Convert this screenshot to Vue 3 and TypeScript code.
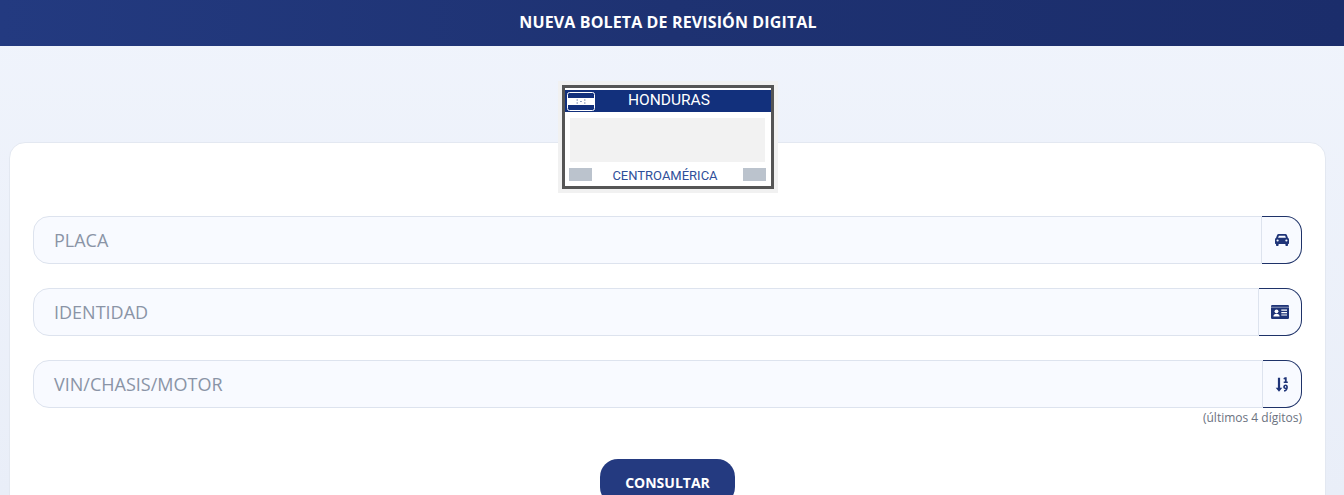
<template>
  <div class="page">
    <header class="topbar">NUEVA BOLETA DE REVISIÓN DIGITAL</header>

    <div class="plate-wrap">
      <div class="plate">
        <div class="plate-head">
          <svg class="flag" viewBox="0 0 28 19">
            <rect x="0.500" y="0.500" width="27" height="18" rx="2" fill="#12307c" stroke="#fff" />
            <rect x="1" y="6" width="26" height="7" fill="#fff" />
            <g fill="#6f82ad">
              <rect x="9.500" y="7.500" width="1.500" height="1" />
              <rect x="9.500" y="10.500" width="1.500" height="1" />
              <rect x="13.200" y="9" width="1.500" height="1" />
              <rect x="17" y="7.500" width="1.500" height="1" />
              <rect x="17" y="10.500" width="1.500" height="1" />
            </g>
          </svg>
          <span class="plate-country">HONDURAS</span>
        </div>
        <div class="plate-number"></div>
        <div class="plate-foot">
          <span class="plate-tab"></span>
          <span class="plate-region">CENTROAMÉRICA</span>
          <span class="plate-tab"></span>
        </div>
      </div>
    </div>

    <main class="card">
      <div v-for="field in fields" :key="field.label" class="field">
        <div class="input-group">
          <div class="input">{{ field.label }}</div>
          <div class="addon" :style="{ width: field.addon + 'px' }">
            <svg v-if="field.icon === 'car'" class="icon" width="16" height="14" viewBox="0 0 16 14">
              <path
                fill="#1f3478"
                fill-rule="evenodd"
                d="M4.600 1h6.800c.7 0 1.200.4 1.500 1l1 2.700c.7.3 1.100.9 1.100 1.700v3.800c0 .4-.3.7-.7.7h-.3v1.300c0 .5-.4.8-.8.8h-1c-.5 0-.8-.3-.8-.8V10.900H4.600v1.300c0 .5-.3.8-.8.8h-1c-.4 0-.8-.3-.8-.8v-1.300h-.3c-.4 0-.7-.3-.7-.7V6.400c0-.8.4-1.400 1.100-1.700l1-2.700c.3-.6.8-1 1.500-1zM4.900 2.800 4.100 4.800h7.800l-.8-2zM3.600 6.400a1.100 1.100 0 1 0 0 2.200 1.100 1.100 0 0 0 0-2.200zm8.800 0a1.100 1.100 0 1 0 0 2.200 1.100 1.100 0 0 0 0-2.200z"
              />
            </svg>
            <svg v-else-if="field.icon === 'card'" class="icon" width="18" height="14" viewBox="0 0 18 14">
              <rect width="18" height="14" rx="1.200" fill="#1f3478" />
              <rect y="1.800" width="18" height="0.800" fill="#fff" opacity="0.600" />
              <circle cx="5.500" cy="6.300" r="1.900" fill="#fff" />
              <path fill="#fff" d="M2.400 11.500c0-1.700 1.300-2.700 3.100-2.700s3.100 1 3.100 2.700z" />
              <path fill="#fff" d="M10.300 4.600h5.700v1.200h-5.700zM10.300 7h5.700v1.200h-5.700zM10.300 9.400h5.700v1.200h-5.700z" />
            </svg>
            <svg v-else class="icon" width="14" height="15" viewBox="0 0 14 15">
              <path fill="#1f3478" d="M2.900 0.800h2.200v10h2.200L4 14.800.7 10.800h2.200z" />
              <path fill="#1f3478" d="M9.900 0.300h1.800v4.300h1.100v1.500H8.700V4.600h1.200V2.200l-1 .4-.5-1.300z" />
              <path
                fill="#1f3478"
                fill-rule="evenodd"
                d="M10.600 7.500c1.400 0 2.300.9 2.300 2.500 0 2.600-1.400 4.500-3.600 4.700l-.4-1.400c.9-.1 1.600-.6 2-1.300-1.600.3-2.700-.5-2.700-1.900 0-1.500 1-2.600 2.400-2.600zm0 1.400c-.4 0-.7.400-.7 1 0 .7.500.9 1.400.7 0-1.100-.2-1.700-.7-1.700z"
              />
            </svg>
          </div>
        </div>
        <div v-if="field.hint" class="hint">{{ field.hint }}</div>
      </div>

      <div class="actions">
        <button class="submit" type="button">CONSULTAR</button>
      </div>
    </main>
  </div>
</template>

<script setup lang="ts">
interface Field {
  label: string;
  icon: "car" | "card" | "digits";
  addon: number;
  hint?: string;
}

const fields: Field[] = [
  { label: "PLACA", icon: "car", addon: 40 },
  { label: "IDENTIDAD", icon: "card", addon: 43 },
  { label: "VIN/CHASIS/MOTOR", icon: "digits", addon: 39, hint: "(últimos 4 dígitos)" },
];
</script>

<style>
html,
body {
  margin: 0;
  height: 100%;
  overflow: hidden;
  background: #eef3fb;
}
</style>

<style scoped>
.page {
  height: 495px;
  overflow: hidden;
  font-family: "Open Sans", sans-serif;
  background: linear-gradient(180deg, #f0f4fc 0%, #e9eef8 100%);
}

.topbar {
  height: 46px;
  line-height: 44px;
  padding-right: 8px;
  text-align: center;
  color: #fff;
  font-size: 16px;
  font-weight: 700;
  letter-spacing: 0.130px;
  background: linear-gradient(90deg, #233a80 0%, #1e3272 50%, #1b2d6b 100%);
}

.plate-wrap {
  display: flex;
  justify-content: center;
  padding: 39px 8px 0 0;
  margin-bottom: -47px;
  position: relative;
  z-index: 1;
}

.plate {
  box-sizing: border-box;
  width: 212px;
  height: 104px;
  border: 3px solid #555;
  outline: 4px solid #f1f1f1;
  background: #fff;
  padding-top: 2px;
  display: flex;
  flex-direction: column;
}

.plate-head {
  height: 22px;
  flex: none;
  display: flex;
  align-items: center;
  background: #12307c;
  padding-left: 2px;
}

.flag {
  width: 28px;
  height: 19px;
  flex: none;
}

.plate-country {
  flex: 1;
  text-align: center;
  color: #fff;
  font-family: Roboto, sans-serif;
  font-size: 15.500px;
  line-height: 20px;
  margin-bottom: 2px;
  padding-right: 28px;
}

.plate-number {
  height: 44px;
  margin: 6px 6px 0 5px;
  background: #f2f2f2;
}

.plate-foot {
  margin: 6px 5px 0 4px;
  display: flex;
  align-items: flex-start;
  justify-content: space-between;
}

.plate-tab {
  width: 23px;
  height: 13px;
  background: #bbc3cd;
}

.plate-region {
  margin: 1px 5px 0 0;
  color: #2f4f9a;
  font-family: Roboto, sans-serif;
  font-size: 13px;
  line-height: 13px;
}

.card {
  box-sizing: border-box;
  margin: 0 18px 0 9px;
  height: 380px;
  padding: 73px 23px 0;
  background: #fff;
  border: 1px solid #e3e8f1;
  border-radius: 16px;
}

.field {
  margin-bottom: 24px;
}

.input-group {
  display: flex;
  height: 48px;
}

.input {
  flex: 1;
  box-sizing: border-box;
  padding-left: 20px;
  line-height: 46px;
  font-size: 18px;
  color: #8a94a6;
  background: #f8faff;
  border: 1px solid #dde3ee;
  border-radius: 16px 0 0 16px;
}

.addon {
  box-sizing: border-box;
  flex: none;
  display: flex;
  align-items: center;
  justify-content: center;
  background: #f8faff;
  border: 1px solid #1e3268;
  border-left: none;
  border-radius: 0 16px 16px 0;
}

.icon {
  display: block;
}

.hint {
  margin-top: 2px;
  text-align: right;
  font-size: 12px;
  line-height: 15px;
  color: #6b7280;
}

.actions {
  display: flex;
  justify-content: center;
  margin-top: 34px;
}

.submit {
  width: 135px;
  height: 46px;
  border: none;
  border-radius: 18px;
  color: #fff;
  font-family: "Open Sans", sans-serif;
  font-size: 14px;
  font-weight: 700;
  background: #243a80;
}
</style>
